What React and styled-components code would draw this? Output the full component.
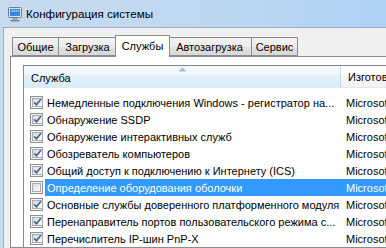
import React from 'react';
import styled, { createGlobalStyle } from 'styled-components';

const GlobalStyle = createGlobalStyle`
  html, body { margin: 0; padding: 0; }
  body {
    width: 386px;
    height: 248px;
    overflow: hidden;
    font-family: "Liberation Sans", Arial, sans-serif;
    font-size: 11px;
    color: #000;
  }
`;

const services = [
  { name: 'Немедленные подключения Windows - регистратор на...', on: true },
  { name: 'Обнаружение SSDP', on: true },
  { name: 'Обнаружение интерактивных служб', on: true },
  { name: 'Обозреватель компьютеров', on: true },
  { name: 'Общий доступ к подключению к Интернету (ICS)', on: true },
  { name: 'Определение оборудования оболочки', on: false, selected: true },
  { name: 'Основные службы доверенного платформенного модуля', on: true },
  { name: 'Перенаправитель портов пользовательского режима с...', on: true },
  { name: 'Перечислитель IP-шин PnP-X', on: true },
  { name: 'Планировщик классов мультимедиа', on: true },
];

const tabs = [
  { label: 'Общие', w: 47 },
  { label: 'Загрузка', w: 59 },
  { label: 'Службы', w: 55, active: true },
  { label: 'Автозагрузка', w: 85 },
  { label: 'Сервис', w: 47 },
];

export default function App() {
  return (
    <>
      <GlobalStyle />
      <Window>
        <TitleBar>
          <AppIcon />
          <Title>Конфигурация системы</Title>
        </TitleBar>
        <Frame>
          <Client>
            <TabStrip>
              {tabs.map((t) => (
                <Tab key={t.label} w={t.w} active={t.active}>{t.label}</Tab>
              ))}
            </TabStrip>
            <Panel>
              <ListBox>
                <Header>
                  <SortedHead>
                    <SortArrow />
                    <HeadLabel>Служба</HeadLabel>
                  </SortedHead>
                  <PlainHead>
                    <HeadLabel>Изготовитель</HeadLabel>
                  </PlainHead>
                </Header>
                <Rows>
                  {services.map((s) => (
                    <Row key={s.name}>
                      <CheckCell>
                        <CheckBox checked={s.on} />
                      </CheckCell>
                      <NameCell selected={s.selected}>{s.name}</NameCell>
                      <MakerCell selected={s.selected}>Microsoft Corporation</MakerCell>
                    </Row>
                  ))}
                </Rows>
              </ListBox>
            </Panel>
          </Client>
        </Frame>
      </Window>
    </>
  );
}

function AppIcon() {
  return (
    <IconBox>
      <svg width="16" height="16" viewBox="0 0 16 16">
        <rect x="1.5" y="1.5" width="13" height="10" rx="1" fill="#dfe4ea" stroke="#6f7d8f" />
        <rect x="3" y="3" width="10" height="7" fill="#3d86d8" />
        <path d="M4 4h8v2H4z" fill="#8fc2f2" opacity="0.8" />
        <path d="M6 12h4l1 2H5z" fill="#9aa5b2" />
        <rect x="3.5" y="14" width="9" height="1.5" fill="#7a8595" />
      </svg>
    </IconBox>
  );
}

function CheckBox({ checked }) {
  return (
    <Box>
      <BoxInner>
        {checked && (
          <svg width="9" height="9" viewBox="0 0 9 9">
            <path d="M1.2 4.4 L3.5 6.8 L7.9 1.3" fill="none" stroke="#4a5f97" strokeWidth="1.7" />
          </svg>
        )}
      </BoxInner>
    </Box>
  );
}

function SortArrow() {
  return (
    <ArrowBox>
      <svg width="9" height="5" viewBox="0 0 9 5">
        <path d="M0.5 4.5 L4.5 0.5 L8.5 4.5 Z" fill="#a9b8cb" />
      </svg>
    </ArrowBox>
  );
}

const Window = styled.div`
  width: 386px;
  height: 248px;
  display: flex;
  flex-direction: column;
  background: linear-gradient(to right, #c8dbee 0%, #bdd7f1 55%, #aed2f6 100%);
`;

const TitleBar = styled.div`
  height: 27px;
  display: flex;
  align-items: center;
  padding-left: 7px;
  gap: 3px;
`;

const IconBox = styled.span`
  width: 16px;
  height: 16px;
  display: flex;
`;

const Title = styled.span`
  font-size: 11.6px;
  color: #000;
  white-space: nowrap;
`;

const Frame = styled.div`
  flex: 1;
  display: flex;
  padding-left: 3px;
  min-height: 0;
`;

const Client = styled.div`
  flex: 1;
  min-width: 0;
  display: flex;
  flex-direction: column;
  background: #f0f0f0;
  border-top: 1px solid #9aaec6;
  border-left: 1px solid #9aaec6;
  padding: 7px 0 0 6px;
  overflow: hidden;
`;

const TabStrip = styled.div`
  display: flex;
  align-items: flex-end;
  height: 21px;
  padding-left: 2px;
`;

const Tab = styled.div`
  position: relative;
  box-sizing: border-box;
  flex: none;
  width: ${(p) => p.w}px;
  height: ${(p) => (p.active ? '22px' : '19px')};
  margin: ${(p) => (p.active ? '0 -2px -1px -2px' : '0 0 0 -1px')};
  padding-bottom: ${(p) => (p.active ? '2px' : '0')};
  z-index: ${(p) => (p.active ? 1 : 0)};
  display: flex;
  align-items: center;
  justify-content: center;
  border: 1px solid #898c95;
  border-bottom: ${(p) => (p.active ? 'none' : '1px solid #898c95')};
  background: ${(p) =>
    p.active ? '#fff' : 'linear-gradient(#f3f3f3 0%, #ececec 50%, #e2e2e2 51%, #d9d9d9 100%)'};
  white-space: nowrap;
  &:first-child { margin-left: 0; }
`;

const Panel = styled.div`
  flex: 1;
  min-height: 0;
  margin-right: -20px;
  background: #fff;
  border: 1px solid #898c95;
  padding: 8px 0 0 12px;
  overflow: hidden;
`;

const ListBox = styled.div`
  height: 100%;
  border: 1px solid #828790;
  border-right: none;
  border-bottom: none;
  background: #fff;
`;

const Header = styled.div`
  display: grid;
  grid-template-columns: 317px 1fr;
  height: 22px;
`;

const SortedHead = styled.div`
  display: flex;
  flex-direction: column;
  border-right: 1px solid #c5d9ec;
  background: linear-gradient(#f4f9fd 0%, #eef6fc 40%, #e2f0fb 41%, #d9ebf9 100%);
`;

const PlainHead = styled.div`
  display: flex;
  flex-direction: column;
  justify-content: flex-end;
  background: linear-gradient(#ffffff 0%, #ffffff 40%, #f7f8f9 41%, #f1f2f4 100%);
  border-bottom: 1px solid #e3e6eb;
`;

const ArrowBox = styled.span`
  display: flex;
  align-self: center;
  height: 5px;
  margin-top: 1px;
`;

const HeadLabel = styled.span`
  padding: 0 0 3px 7px;
  margin-top: auto;
  line-height: 13px;
  white-space: nowrap;
`;

const Rows = styled.div`
  padding-top: 6px;
`;

const Row = styled.div`
  display: grid;
  grid-template-columns: 21px 296px 1fr;
  height: 17px;
  align-items: stretch;
`;

const CheckCell = styled.div`
  display: flex;
  align-items: center;
  padding-left: 6px;
`;

const Box = styled.span`
  box-sizing: border-box;
  width: 13px;
  height: 13px;
  border: 1px solid #8e8f8f;
  background: #f4f4f4;
  padding: 1px;
  display: flex;
`;

const BoxInner = styled.span`
  flex: 1;
  display: flex;
  align-items: center;
  justify-content: center;
  border: 1px solid #a9acb2;
  background: linear-gradient(135deg, #d7dadf 0%, #eceef0 60%, #f8f8f8 100%);
`;

const NameCell = styled.div`
  display: flex;
  align-items: center;
  padding-left: 2px;
  white-space: nowrap;
  overflow: hidden;
  background: ${(p) => (p.selected ? '#3399ff' : 'transparent')};
  color: ${(p) => (p.selected ? '#fff' : '#000')};
`;

const MakerCell = styled(NameCell)`
  padding-left: 5px;
`;
